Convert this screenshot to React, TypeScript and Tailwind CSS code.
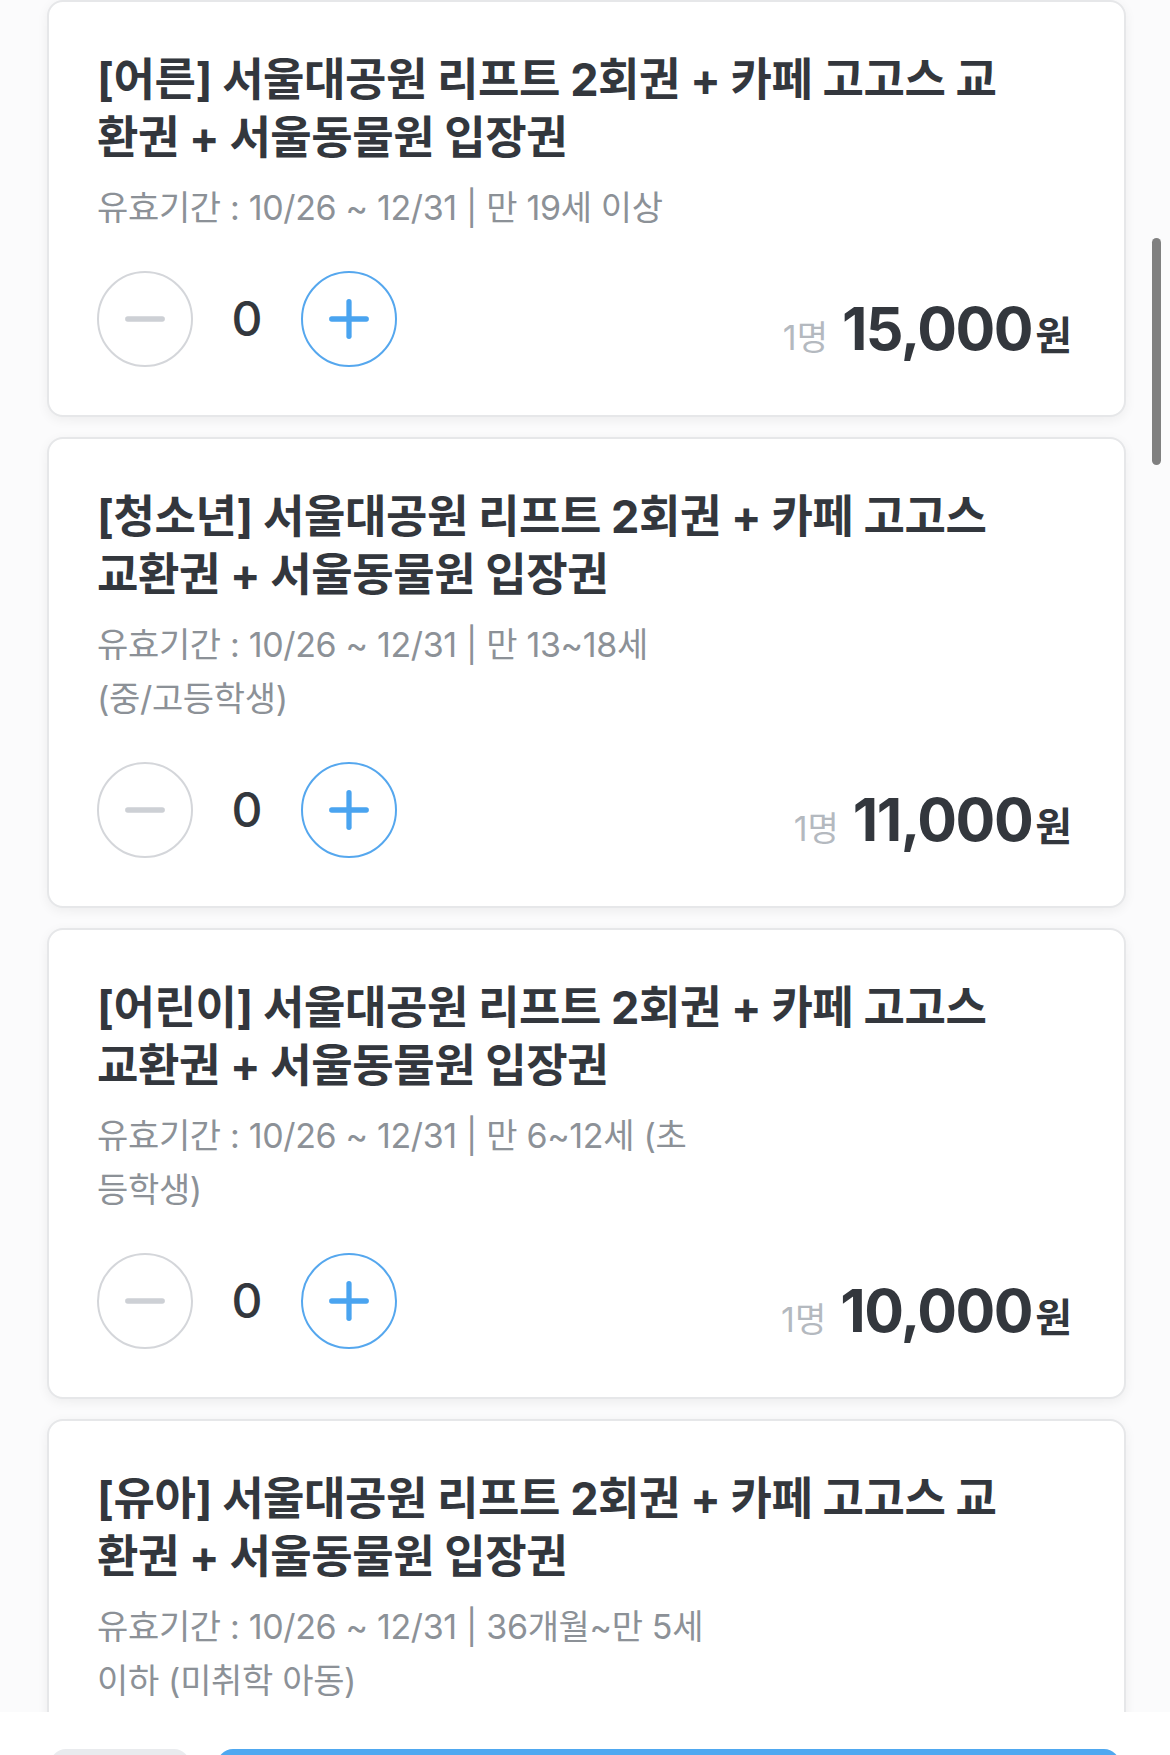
import React from "react";

type Ticket = {
  title: string[];
  sub: string[];
  price: string;
};

const tickets: Ticket[] = [
  {
    title: ["[어른] 서울대공원 리프트 2회권 + 카페 고고스 교", "환권 + 서울동물원 입장권"],
    sub: ["유효기간 : 10/26 ~ 12/31 | 만 19세 이상"],
    price: "15,000",
  },
  {
    title: ["[청소년] 서울대공원 리프트 2회권 + 카페 고고스", "교환권 + 서울동물원 입장권"],
    sub: ["유효기간 : 10/26 ~ 12/31 | 만 13~18세", "(중/고등학생)"],
    price: "11,000",
  },
  {
    title: ["[어린이] 서울대공원 리프트 2회권 + 카페 고고스", "교환권 + 서울동물원 입장권"],
    sub: ["유효기간 : 10/26 ~ 12/31 | 만 6~12세 (초", "등학생)"],
    price: "10,000",
  },
  {
    title: ["[유아] 서울대공원 리프트 2회권 + 카페 고고스 교", "환권 + 서울동물원 입장권"],
    sub: ["유효기간 : 10/26 ~ 12/31 | 36개월~만 5세", "이하 (미취학 아동)"],
    price: "8,000",
  },
];

const FONT = { fontFamily: 'Inter, "Noto Sans CJK KR", sans-serif' };

function MinusBtn() {
  return (
    <button className="w-[96px] h-[96px] rounded-full border-2 border-[#d4d6da] bg-white flex items-center justify-center shrink-0">
      <svg width="96" height="96" viewBox="0 0 96 96">
        <line x1="30" y1="48" x2="66" y2="48" stroke="#cdd0d5" strokeWidth="5.5" strokeLinecap="round" />
      </svg>
    </button>
  );
}

function PlusBtn() {
  return (
    <button className="w-[96px] h-[96px] rounded-full border-2 border-[#55a7ee] bg-white flex items-center justify-center shrink-0">
      <svg width="96" height="96" viewBox="0 0 96 96">
        <line x1="30" y1="48" x2="66" y2="48" stroke="#4aa4f0" strokeWidth="5.5" strokeLinecap="round" />
        <line x1="48" y1="30" x2="48" y2="66" stroke="#4aa4f0" strokeWidth="5.5" strokeLinecap="round" />
      </svg>
    </button>
  );
}

function Card({ t }: { t: Ticket }) {
  return (
    <div className="bg-white border-2 border-[#e6e7e9] rounded-[16px] shadow-[0_3px_12px_rgba(0,0,0,0.06)] pl-[48px] pr-[52px] pt-[49px] pb-[48px] shrink-0">
      <div className="text-[45px] leading-[58px] font-bold text-[#33373d] tracking-[-0.01em]">
        {t.title.map((l, i) => (
          <div key={i} className="whitespace-nowrap">{l}</div>
        ))}
      </div>
      <div className="mt-[14px] text-[34px] leading-[54px] text-[#8c9197] tracking-[-0.01em]">
        {t.sub.map((l, i) => (
          <div key={i} className="whitespace-nowrap">{l}</div>
        ))}
      </div>
      <div className="mt-[36px] flex items-center justify-between">
        <div className="flex items-center">
          <MinusBtn />
          <div className="w-[108px] text-center text-[48px] leading-none font-medium text-[#33373d]">0</div>
          <PlusBtn />
        </div>
        <div className="flex items-baseline mt-[26px]">
          <span className="text-[34px] text-[#b4b9bf] mr-[14px]">1명</span>
          <span className="text-[59px] leading-none font-bold text-[#33373d] tracking-[-0.025em]">{t.price}</span>
          <span className="text-[40px] font-bold text-[#33373d] ml-[3px]">원</span>
        </div>
      </div>
    </div>
  );
}

export default function App() {
  return (
    <div className="relative w-[1170px] h-[1755px] bg-white overflow-hidden flex flex-col" style={FONT}>
      <div className="h-[1712px] overflow-hidden shrink-0 bg-[#fbfbfc]">
        <div className="flex flex-col gap-[20px] pl-[47px] pr-[44px]">
          {tickets.map((t, i) => (
            <Card key={i} t={t} />
          ))}
        </div>
      </div>
      <div className="flex-1 bg-white pt-[37px] pl-[50px] pr-[50px] flex gap-[27px]">
        <div className="w-[140px] h-[100px] rounded-[16px] bg-[#e9ebee] shrink-0" />
        <div className="w-[903px] h-[100px] rounded-[16px] bg-[#4fa8f0]" />
      </div>
      <div className="absolute right-[9px] top-[238px] w-[9px] h-[227px] rounded-full bg-[#808080]" />
    </div>
  );
}
